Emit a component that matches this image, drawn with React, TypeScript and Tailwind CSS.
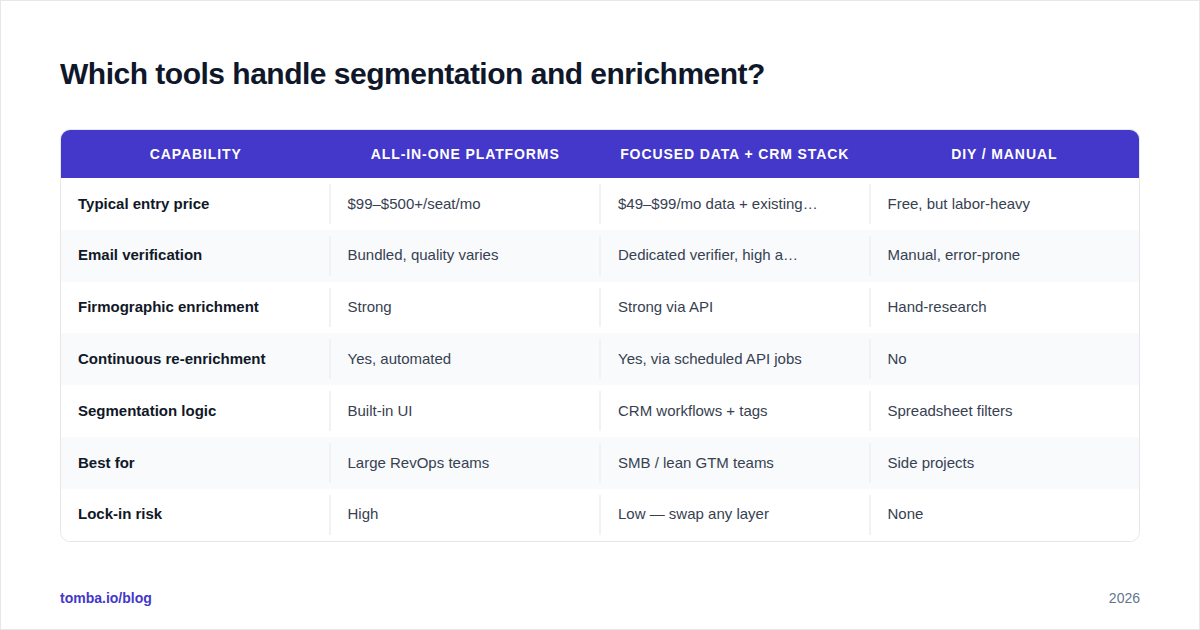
import React from "react";

const rows: [string, string, string, string][] = [
  ["Typical entry price", "$99–$500+/seat/mo", "$49–$99/mo data + existing…", "Free, but labor-heavy"],
  ["Email verification", "Bundled, quality varies", "Dedicated verifier, high a…", "Manual, error-prone"],
  ["Firmographic enrichment", "Strong", "Strong via API", "Hand-research"],
  ["Continuous re-enrichment", "Yes, automated", "Yes, via scheduled API jobs", "No"],
  ["Segmentation logic", "Built-in UI", "CRM workflows + tags", "Spreadsheet filters"],
  ["Best for", "Large RevOps teams", "SMB / lean GTM teams", "Side projects"],
  ["Lock-in risk", "High", "Low — swap any layer", "None"],
];

const headers = ["Capability", "All-in-one platforms", "Focused data + CRM stack", "DIY / Manual"];

export default function App() {
  return (
    <div
      className="w-[1200px] h-[630px] bg-white border border-[#e5e7eb] flex flex-col px-[59px] pt-[54px] pb-[20px] box-border"
      style={{ fontFamily: '"Liberation Sans", Arial, sans-serif' }}
    >
      <h1 className="text-[30px] leading-[38px] font-bold text-[#0f172a] tracking-[-0.5px]">
        Which tools handle segmentation and enrichment?
      </h1>
      <div className="mt-[36px] border border-[#e5e7eb] rounded-[10px] overflow-hidden">
        <div className="grid grid-cols-4 bg-[#4338ca] h-[48px] items-center">
          {headers.map((h) => (
            <div key={h} className="text-center text-white uppercase font-bold text-[14px] tracking-[0.9px] pt-[1px]">
              {h}
            </div>
          ))}
        </div>
        {rows.map((r, i) => (
          <div
            key={i}
            className={`grid grid-cols-4 h-[51.8px] py-[6px] ${i % 2 === 1 ? "bg-[#f8fafc]" : "bg-white"}`}
          >
            {r.map((c, j) => (
              <div
                key={j}
                className={`flex items-center whitespace-nowrap overflow-hidden text-[15px] ${
                  j === 0
                    ? "px-[17px] font-bold text-[#111827]"
                    : j === 1
                    ? "-ml-[2px] px-[17px] border-l-2 border-[#f1f2f4] text-[#374151]"
                    : "-ml-[1px] px-[17px] border-l-2 border-[#f1f2f4] text-[#374151]"
                }`}
              >
                {c}
              </div>
            ))}
          </div>
        ))}
      </div>
      <div className="mt-auto flex justify-between items-center text-[14px]">
        <span className="font-bold text-[#4338ca]">tomba.io/blog</span>
        <span className="text-[#64748b]">2026</span>
      </div>
    </div>
  );
}
